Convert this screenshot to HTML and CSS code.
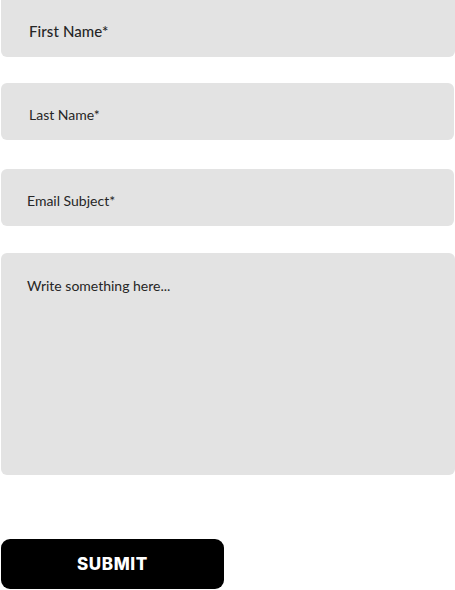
FILE: index.html
```html
<!DOCTYPE html>
<html>
<head>
<meta charset="utf-8">
<link rel="stylesheet" href="styles.css">
</head>
<body>
<form class="form">
  <input class="field field-first" type="text" placeholder="First Name*">
  <input class="field field-last" type="text" placeholder="Last Name*">
  <input class="field field-subject" type="text" placeholder="Email Subject*">
  <textarea class="field area" placeholder="Write something here..."></textarea>
  <button class="submit" type="button">SUBMIT</button>
</form>
</body>
</html>
```
FILE: styles.css
```css
html, body {
  margin: 0;
  padding: 0;
  background: #fff;
}
.form {
  display: flex;
  flex-direction: column;
  align-items: flex-start;
  padding-left: 1px;
  margin-top: -6px;
}
.field {
  box-sizing: border-box;
  border: none;
  outline: none;
  background: #e3e3e3;
  border-radius: 6px;
  font-family: Lato, "Liberation Sans", sans-serif;
  font-size: 14px;
  color: #262626;
  margin: 0;
  resize: none;
}
.field::placeholder {
  color: #262626;
  opacity: 1;
}
.field-first {
  width: 454px;
  height: 63px;
  padding: 11px 0 0 28px;
  font-size: 15px;
  font-weight: 500;
  letter-spacing: 0.1px;
}
.field-last {
  width: 453px;
  height: 57px;
  margin-top: 26px;
  padding: 5px 0 0 28px;
}
.field-subject {
  width: 453px;
  height: 57px;
  margin-top: 29px;
  padding: 5px 0 0 26px;
}
.area {
  display: block;
  width: 454px;
  height: 222px;
  margin-top: 27px;
  padding: 24px 0 0 26px;
  line-height: 17px;
}
.submit {
  margin-top: 64px;
  width: 223px;
  height: 50px;
  border: none;
  border-radius: 9px;
  background: #000;
  color: #fff;
  font-family: Inter, "Liberation Sans", sans-serif;
  font-weight: 800;
  font-size: 17px;
  letter-spacing: 0.6px;
  padding: 0;
  cursor: pointer;
}
```
